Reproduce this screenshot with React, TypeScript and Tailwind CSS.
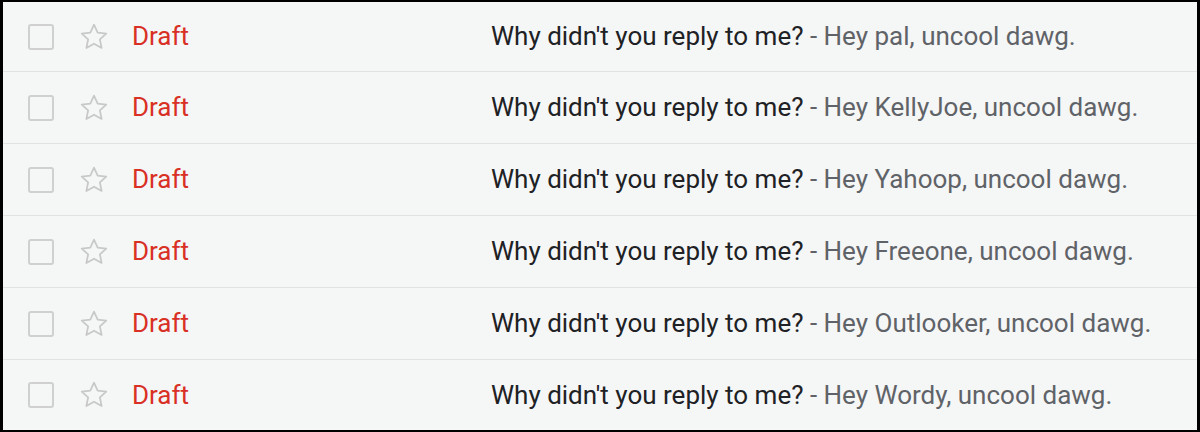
const rows = ['pal', 'KellyJoe', 'Yahoop', 'Freeone', 'Outlooker', 'Wordy'];

function StarIcon() {
  return (
    <svg width="32" height="32" viewBox="0 0 24 24" fill="none" className="text-[#c8c8c8]">
      <path
        d="M12 2.8l2.75 5.95 6.45.7-4.8 4.4 1.32 6.38L12 17l-5.72 3.23 1.32-6.38-4.8-4.4 6.45-.7z"
        stroke="currentColor"
        strokeWidth="1.3"
        strokeLinejoin="round"
      />
    </svg>
  );
}

export default function App() {
  return (
    <main className="h-[432px] w-[1200px] overflow-hidden border-x-[3px] border-y-2 border-black bg-[#f5f6f6] font-['Roboto','Liberation_Sans',sans-serif]">
      {rows.map((name) => (
        <div
          key={name}
          className="flex h-[72px] items-center border-b border-[#e2e2e2] first:h-[70px] last:h-[70px] last:border-b-0"
        >
          <div className="ml-[25px] h-[26px] w-[26px] rounded-[3px] border-2 border-[#d0d0d0]" />
          <div className="ml-[23px] flex w-[34px] items-center justify-center">
            <StarIcon />
          </div>
          <span className="ml-[21px] w-[359px] text-[26px] text-[#d93025]">Draft</span>
          <span className="whitespace-nowrap text-[26px] text-[#202124]">
            Why didn&apos;t you reply to me?
            <span className="text-[#5f6368]"> - Hey {name}, uncool dawg.</span>
          </span>
        </div>
      ))}
    </main>
  );
}
